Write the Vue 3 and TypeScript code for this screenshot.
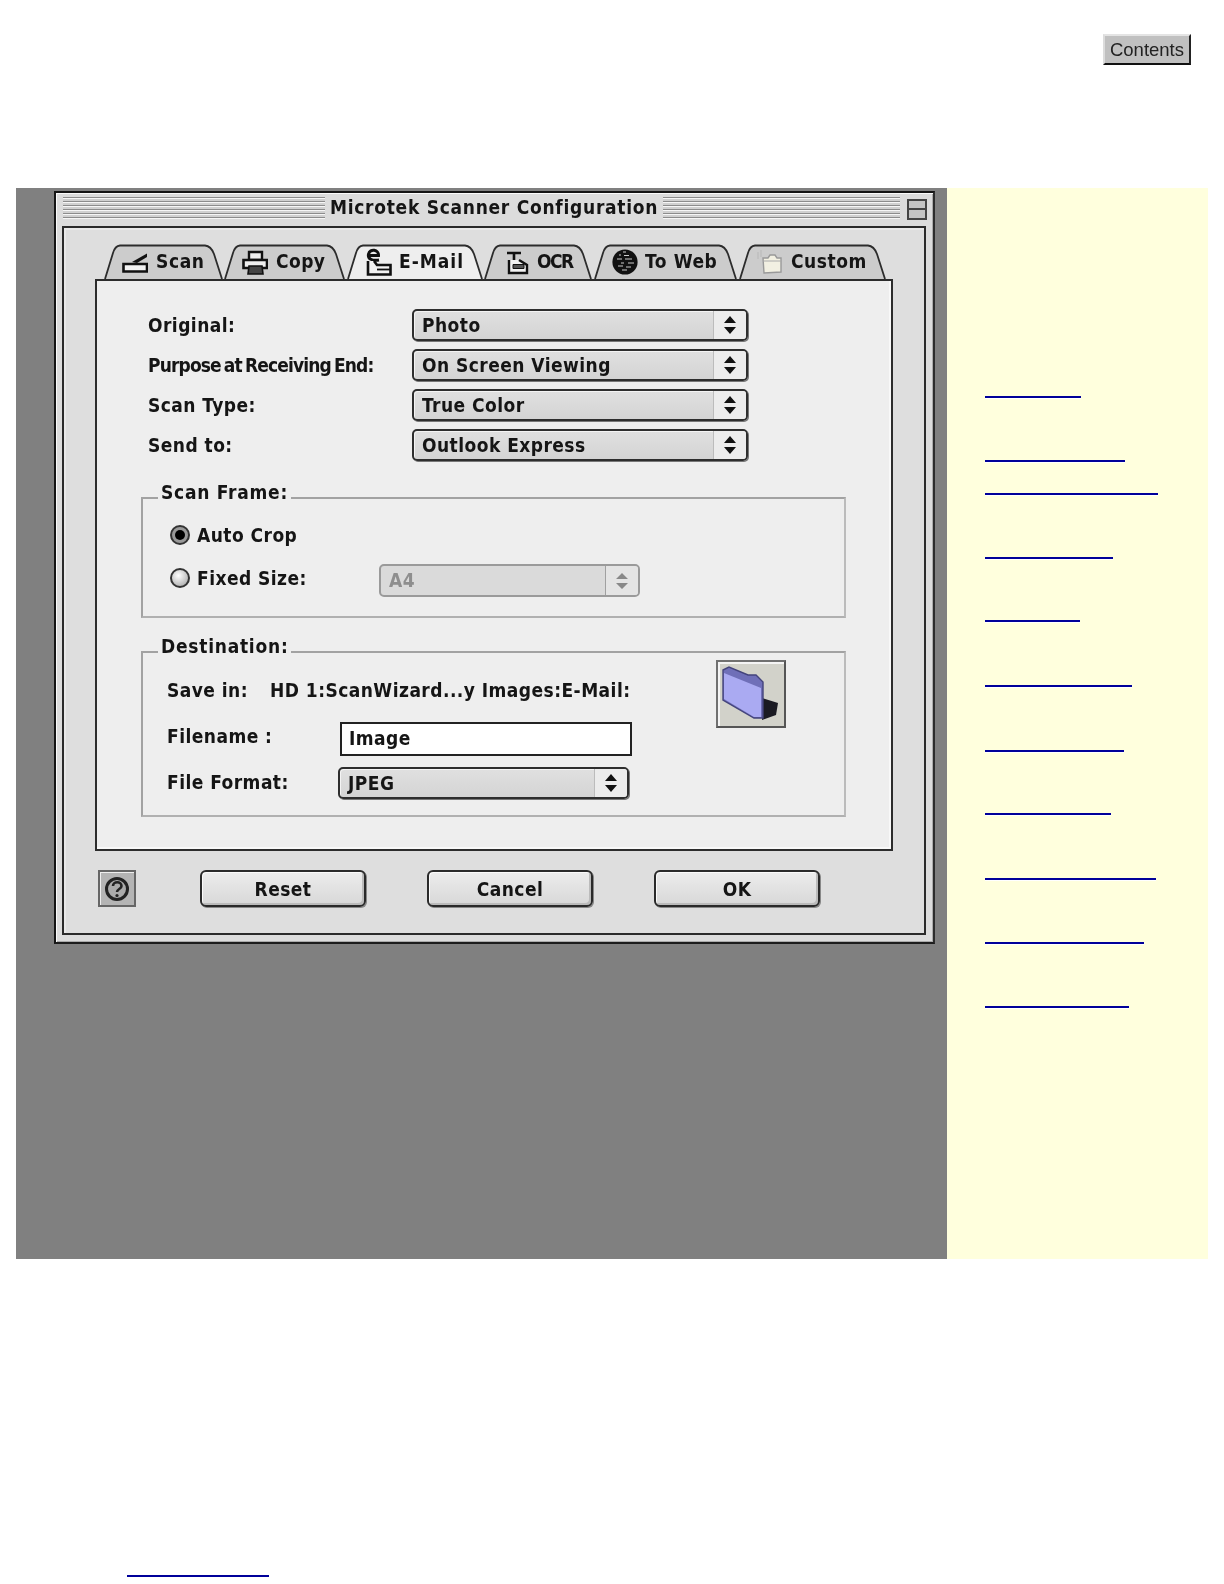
<script setup lang="ts">
interface Tab { name: string; w: number; pad: number; gap: number; ls: number; icon: string; active?: boolean }
const tabs: Tab[] = [
  { name: 'Scan', w: 120, pad: 17, gap: 8, ls: 0.6, icon: 'scan' },
  { name: 'Copy', w: 123, pad: 17, gap: 8, ls: 0.45, icon: 'copy' },
  { name: 'E-Mail', w: 137, pad: 18, gap: 7, ls: 1, icon: 'mail', active: true },
  { name: 'OCR', w: 110, pad: 20, gap: 6, ls: -1.5, icon: 'ocr' },
  { name: 'To Web', w: 145, pad: 17, gap: 7, ls: 0.6, icon: 'web' },
  { name: 'Custom', w: 146, pad: 17, gap: 8, ls: 0.55, icon: 'custom' },
]
function tabPath(w: number, gap: number): string {
  const r = w - gap
  return `M0,35 L8,9 Q10,2 15,1.5 H${r - 18} Q${r - 12},2 ${r - 9},10 L${r - 1},35`
}
function tabGap(i: number): number {
  return [2, 3, 2, 3, 3, 0][i]
}
const rows = [
  { label: 'Original:', value: 'Photo', tight: false },
  { label: 'Purpose at Receiving End:', value: 'On Screen Viewing', tight: true },
  { label: 'Scan Type:', value: 'True Color', tight: false },
  { label: 'Send to:', value: 'Outlook Express', tight: false },
]
const linkYs = [396, 460, 493, 557, 620, 685, 750, 813, 878, 942, 1006]
const linkWs = [96, 140, 173, 128, 95, 147, 139, 126, 171, 159, 144]
const links = linkYs.map((y, i) => ({
  width: linkWs[i],
  top: i === 0 ? y - 188 : y - linkYs[i - 1] - 2,
}))
</script>

<template>
  <div class="page">
    <div class="top">
      <button class="contents">Contents</button>
    </div>
    <div class="main">
      <div class="canvas">
        <div class="window">
          <div class="titlebar">
            <div class="stripes left"></div>
            <div class="title">Microtek Scanner Configuration</div>
            <div class="stripes right"></div>
            <div class="wbox"><span></span></div>
          </div>
          <div class="frame">
            <div class="tabs">
              <div
                v-for="(t, i) in tabs"
                :key="t.name"
                class="tab"
                :class="{ active: t.active }"
                :style="{ width: t.w + 'px', paddingLeft: t.pad + 'px', letterSpacing: t.ls + 'px' }"
              >
                <svg class="tabshape" :width="t.w" height="36">
                  <path :d="tabPath(t.w, tabGap(i))" />
                </svg>
                <svg class="ticon" width="26" height="28" viewBox="0 0 26 28">
                  <g v-if="t.icon === 'scan'">
                    <path d="M10 14 L25 5.5 L25 9 L15 15 Z" fill="#111" />
                    <path d="M1.5 16 H25 V23.5 H1.5 Z" fill="#f2f2f2" stroke="#111" stroke-width="2.6" />
                  </g>
                  <g v-else-if="t.icon === 'copy'">
                    <path d="M7 4 H20 V12 H7 Z" fill="#eee" stroke="#111" stroke-width="2.4" />
                    <path d="M1.5 12 H25 V20 H1.5 Z" fill="#eee" stroke="#111" stroke-width="2.6" />
                    <path d="M7 18 H20 L21 26 H6 Z" fill="#444" stroke="#111" stroke-width="1.6" />
                  </g>
                  <g v-else-if="t.icon === 'mail'">
                    <path d="M3 7.5 H12.5 C13 1.5 4 0 2.5 6 C1.5 11 6 13 13 12" fill="none" stroke="#111" stroke-width="3" />
                    <path d="M2 13 V26.5 H24.5 V17 H11 L8 13" fill="#f2f2f2" stroke="#111" stroke-width="2.6" />
                    <path d="M11 21.5 H24.5" stroke="#111" stroke-width="1.8" />
                  </g>
                  <g v-else-if="t.icon === 'ocr'">
                    <path d="M2 5 H16 M9 5 V15" stroke="#111" stroke-width="2.6" fill="none" />
                    <path d="M4 12 V25 H22 V17 L14 12" fill="#f2f2f2" stroke="#111" stroke-width="2.4" />
                    <path d="M8 16.5 H19 V20.5 H8 Z" fill="#555" stroke="#111" stroke-width="1" />
                  </g>
                  <g v-else-if="t.icon === 'web'">
                    <circle cx="13" cy="14" r="12.6" fill="#111" />
                    <path d="M11 4 h3 M7 7 h2 M12 7.5 h5 M5 11 h5 M13 11 h7 M9 15 h3 M16 15 h6 M6 18 h5 M14 19 h5 M10 22 h5" stroke="#ccc" stroke-width="1.2" />
                  </g>
                  <g v-else>
                    <path d="M1 4 V11 M4 2 V9" stroke="#bbb" stroke-width="1.2" />
                    <path d="M6 10 H11 L13 7 H18 L20 10 H24 V24 L7 25 Z" fill="#f2f0e2" stroke="#999" stroke-width="1.4" />
                    <path d="M6 13 H24" stroke="#aaa" stroke-width="1" />
                  </g>
                </svg>
                <span class="tlabel" :style="{ marginLeft: t.gap + 'px' }">{{ t.name }}</span>
              </div>
            </div>
            <div class="panel">
              <div class="form">
                <div v-for="r in rows" :key="r.label" class="frow">
                  <span class="lbl" :class="{ tight: r.tight }">{{ r.label }}</span>
                  <div class="sel wide">
                    <span class="seltext">{{ r.value }}</span>
                    <span class="arrows">
                      <svg width="14" height="20" viewBox="0 0 14 20"><path d="M7 1 L13 8 H1 Z M7 19 L13 12 H1 Z" fill="#111" /></svg>
                    </span>
                  </div>
                </div>
              </div>

              <div class="group scanframe">
                <span class="legend">Scan Frame:</span>
                <div class="radiorow auto">
                  <span class="radio on"><i></i></span>
                  <span class="lbl">Auto Crop</span>
                </div>
                <div class="radiorow">
                  <span class="radio up"></span>
                  <span class="lbl fixed">Fixed Size:</span>
                  <div class="sel disabled">
                    <span class="seltext">A4</span>
                    <span class="arrows">
                      <svg width="14" height="20" viewBox="0 0 14 20"><path d="M7 2 L13 8 H1 Z M7 18 L13 12 H1 Z" fill="#888" /></svg>
                    </span>
                  </div>
                </div>
              </div>

              <div class="group dest">
                <span class="legend">Destination:</span>
                <div class="destleft">
                  <div class="saverow">
                    <span class="lbl savelbl">Save in:</span>
                    <span class="lbl path">HD 1:ScanWizard...y Images:E-Mail:</span>
                  </div>
                  <div class="namerow">
                    <span class="lbl namelbl">Filename :</span>
                    <div class="input">Image</div>
                  </div>
                  <div class="fmtrow">
                    <span class="lbl fmtlbl">File Format:</span>
                    <div class="sel fmt">
                      <span class="seltext">JPEG</span>
                      <span class="arrows">
                        <svg width="14" height="20" viewBox="0 0 14 20"><path d="M7 1 L13 8 H1 Z M7 19 L13 12 H1 Z" fill="#111" /></svg>
                      </span>
                    </div>
                  </div>
                </div>
                <div class="folderbtn">
                  <svg width="66" height="64" viewBox="0 0 66 64">
                    <path d="M44 36 L60 41 L58 53 L44 58 Z" fill="#1a1a22" />
                    <path d="M5 8 L11 5 L30 13 L38 13 L45 20 L45 56 L36 56 L5 38 Z" fill="#6f6fb8" stroke="#44447c" stroke-width="1.4" />
                    <path d="M6 11 L43 26 L43 55 L36 55 L6 37 Z" fill="#aaaaf2" />
                  </svg>
                </div>
              </div>
            </div>

            <div class="actions">
              <div class="help">
                <svg width="26" height="26" viewBox="0 0 26 26">
                  <circle cx="13" cy="13" r="10.5" fill="#aaa" stroke="#222" stroke-width="3" />
                  <path d="M9 10 C9 5 17.5 5 17.5 10 C17.5 13 13 13 13 16" fill="none" stroke="#222" stroke-width="2.6" />
                  <circle cx="13" cy="19.5" r="1.6" fill="#222" />
                </svg>
              </div>
              <button class="btn">Reset</button>
              <button class="btn">Cancel</button>
              <button class="btn">OK</button>
            </div>
          </div>
        </div>
      </div>
      <div class="side">
        <a
          v-for="(l, i) in links"
          :key="i"
          class="link"
          :style="{ width: l.width + 'px', marginTop: l.top + 'px' }"
        ></a>
      </div>
    </div>
    <a class="link foot"></a>
  </div>
</template>

<style>
html, body { margin: 0; background: #fff; }
</style>

<style scoped>
.page {
  width: 1224px;
  height: 1584px;
  overflow: hidden;
  background: #fff;
  font-family: "DejaVu Sans", "Liberation Sans", sans-serif;
  color: #151515;
}
.top {
  height: 188px;
  box-sizing: border-box;
  padding: 34px 33px 0 0;
  display: flex;
  justify-content: flex-end;
  align-items: flex-start;
}
.contents {
  width: 88px;
  height: 31px;
  padding: 0 0 0 0;
  background: #c0c0c0;
  border: 2px solid;
  border-color: #e4e4e4 #222 #111 #dcdcdc;
  font: 18.5px "Liberation Sans", sans-serif;
  color: #222;
  filter: blur(0.3px);
}
.main {
  margin-left: 16px;
  width: 1192px;
  height: 1071px;
  display: flex;
}
.canvas {
  width: 931px;
  flex: none;
  background: #808080;
  padding: 3px 0 0 38px;
  box-sizing: border-box;
}
.side {
  flex: 1;
  background: #ffffdd;
  padding-left: 38px;
  display: flex;
  flex-direction: column;
  align-items: flex-start;
}
.link {
  display: block;
  height: 2px;
  background: #00009a;
  box-shadow: 0 1px 0 #fff;
  flex: none;
}
.foot {
  width: 142px;
  margin: 316px 0 0 127px;
}
.window {
  width: 881px;
  height: 753px;
  box-sizing: border-box;
  background: #dcdcdc;
  border: 2px solid #141414;
  border-bottom: 2px solid #1c1c1c;
  border-right: 2px solid #2c2c2c;
  box-shadow: inset 1px 1px 0 #fafafa, inset -1px -1px 0 #aaa;
  padding: 0 6px 0 6px;
  filter: blur(0.4px);
}
.titlebar {
  height: 33px;
  display: flex;
  align-items: flex-start;
  padding-top: 4px;
  box-sizing: border-box;
}
.stripes {
  height: 22px;
  flex: none;
  background: repeating-linear-gradient(to bottom, #8c8c8c 0 1px, #f6f6f6 1px 2px, #d0d0d0 2px 4px);
}
.stripes.left { width: 262px; margin-left: 1px; }
.stripes.right { width: 237px; }
.title {
  width: 338px;
  flex: none;
  text-align: center;
  font-weight: 700;
  font-size: 19px;
  line-height: 28px;
  margin-top: -4px;
  font-stretch: condensed;
  letter-spacing: 0.72px;
  white-space: nowrap;
}
.wbox {
  width: 20px;
  height: 21px;
  margin: 2px 0 0 7px;
  flex: none;
  box-sizing: border-box;
  border: 2px solid #444;
  background: #c4c4c4;
}
.wbox span {
  display: block;
  height: 7px;
  border-bottom: 2px solid #444;
}
.frame {
  width: 864px;
  height: 709px;
  box-sizing: border-box;
  border: 2px solid #2a2a2a;
  background: #dedede;
  box-shadow: inset 2px 2px 0 #e8e8e8;
  padding: 16px 0 0 31px;
}
.tabs {
  display: flex;
  height: 35px;
  margin-left: 10px;
  position: relative;
  z-index: 1;
}
.tab {
  position: relative;
  flex: none;
  height: 35px;
  box-sizing: border-box;
  display: flex;
  align-items: center;
  font-weight: 700;
  font-size: 19px;
  font-stretch: condensed;
}
.tabshape {
  position: absolute;
  left: 0;
  top: 0;
  overflow: visible;
}
.tabshape path {
  fill: #cccccc;
  stroke: #2c2c2c;
  stroke-width: 1.8;
}
.tab.active .tabshape path { fill: #eeeeee; }
.ticon { position: relative; flex: none; }
.tlabel {
  position: relative;
  top: -1px;
  line-height: 24px;
}
.panel {
  width: 798px;
  height: 572px;
  box-sizing: border-box;
  background: #eeeeee;
  border: 2px solid #2c2c2c;
  box-shadow: inset -2px -2px 0 #f8f8f8;
  padding: 28px 0 0 44px;
  font-weight: 700;
  font-size: 19px;
  font-stretch: condensed;
  letter-spacing: 0.45px;
}
.form {
  display: flex;
  flex-direction: column;
  gap: 8px;
  margin-left: 7px;
}
.frow {
  display: flex;
  align-items: center;
  height: 32px;
}
.frow .lbl { width: 264px; flex: none; }
.lbl { white-space: nowrap; line-height: 24px; }
.tight {
  letter-spacing: -0.87px;
  word-spacing: -2px;
}
.sel {
  display: flex;
  align-items: stretch;
  box-sizing: border-box;
  height: 32px;
  border: 2px solid #2e2e2e;
  border-radius: 5px;
  background: linear-gradient(#e0e0e0, #d4d4d4);
  box-shadow: 1px 1px 0 #777, inset 1px 1px 0 #f4f4f4;
  flex: none;
}
.sel.wide { width: 336px; }
.seltext {
  flex: 1;
  padding-left: 8px;
  line-height: 29px;
  white-space: nowrap;
}
.arrows {
  width: 33px;
  flex: none;
  display: flex;
  align-items: center;
  justify-content: center;
  background: #ececec;
  box-shadow: inset 1px 0 0 #bcbcbc;
  border-radius: 0 3px 3px 0;
}
.group {
  position: relative;
  box-sizing: border-box;
  width: 705px;
  border: 2px solid #a2a2a2;
  border-right-color: #bbb;
  border-bottom-color: #b0b0b0;
}
.legend {
  position: absolute;
  left: 15px;
  top: -19px;
  padding: 0 3px;
  background: #eeeeee;
  line-height: 24px;
  white-space: nowrap;
  letter-spacing: 0.75px;
}
.scanframe {
  height: 121px;
  margin-top: 36px;
  padding: 24px 0 0 27px;
}
.radiorow {
  display: flex;
  align-items: center;
  height: 33px;
}
.radiorow.auto {
  height: 24px;
  margin-bottom: 17px;
}
.radio {
  width: 20px;
  height: 20px;
  flex: none;
  box-sizing: border-box;
  border-radius: 50%;
  border: 2px solid #333;
  background: radial-gradient(circle at 40% 35%, #fff 0, #bbb 70%, #888 100%);
  margin-right: 7px;
  display: flex;
  align-items: center;
  justify-content: center;
}
.radio.on { background: #999; }
.radio.up { margin-top: -5px; }
.radio i {
  display: block;
  width: 10px;
  height: 10px;
  border-radius: 50%;
  background: #000;
}
.lbl.fixed { width: 182px; flex: none; margin-top: -6px; }
.sel.disabled {
  width: 261px;
  height: 33px;
  border-color: #9a9a9a;
  background: #dadada;
  color: #8e8e8e;
  box-shadow: none;
}
.sel.disabled .arrows { background: #e4e4e4; box-shadow: inset 1px 0 0 #a0a0a0; }
.dest {
  height: 166px;
  margin-top: 33px;
  display: flex;
}
.path { letter-spacing: 0.45px; }
.destleft {
  width: 573px;
  flex: none;
  box-sizing: border-box;
  padding: 25px 0 0 24px;
}
.saverow {
  display: flex;
  height: 24px;
}
.savelbl { width: 103px; flex: none; }
.namerow {
  display: flex;
  margin-top: 20px;
  align-items: center;
}
.namelbl { width: 173px; flex: none; margin-top: -7px; }
.input {
  width: 292px;
  height: 34px;
  box-sizing: border-box;
  background: #fff;
  border: 2px solid #222;
  padding-left: 7px;
  line-height: 28px;
}
.fmtrow {
  display: flex;
  align-items: center;
  margin-top: 11px;
}
.fmtlbl { width: 171px; flex: none; margin-top: -3px; }
.sel.fmt { width: 291px; }
.folderbtn {
  width: 70px;
  height: 68px;
  margin-top: 7px;
  box-sizing: border-box;
  background: #d2d2ca;
  border: 2px solid;
  border-color: #707070 #555 #555 #707070;
  box-shadow: inset 2px 2px 0 #f4f4f4;
  display: flex;
  align-items: center;
  justify-content: center;
  flex: none;
}
.actions {
  display: flex;
  align-items: center;
  margin-top: 19px;
  margin-left: 3px;
}
.help {
  width: 38px;
  height: 37px;
  box-sizing: border-box;
  background: #b4b4b4;
  border: 2px solid #666;
  box-shadow: inset 1px 1px 0 #eee;
  display: flex;
  align-items: center;
  justify-content: center;
  margin-right: 64px;
  flex: none;
}
.btn {
  width: 166px;
  height: 37px;
  margin-right: 61px;
  padding: 0;
  flex: none;
  background: linear-gradient(#ececec, #d8d8d8);
  border: 2px solid #2a2a2a;
  border-radius: 6px;
  box-shadow: 1px 1px 0 #888, inset -2px -2px 0 #bbb, inset 1px 1px 0 #fafafa;
  font: 700 19px "DejaVu Sans", "Liberation Sans", sans-serif;
  font-stretch: condensed;
  letter-spacing: 0.45px;
  color: #151515;
}
</style>
